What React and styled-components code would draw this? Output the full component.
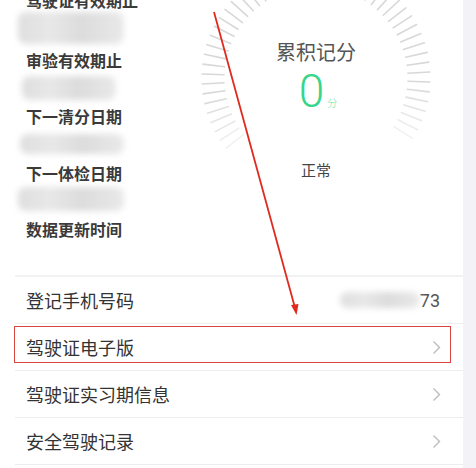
import React from "react";
import styled, { createGlobalStyle } from "styled-components";

const GlobalStyle = createGlobalStyle`
  html, body {
    margin: 0;
    padding: 0;
    background: #f3f3f7;
    overflow: hidden;
  }
  body {
    font-family: "Noto Sans CJK SC", "Noto Sans", sans-serif;
  }
`;

const Screen = styled.div`
  position: relative;
  width: 476px;
  height: 468px;
  overflow: hidden;
  background: #f3f3f7;
`;

const Card = styled.div`
  width: 463px;
  height: 468px;
  background: #fff;
  overflow: hidden;
`;

const TopSection = styled.section`
  display: flex;
  height: 286px;
  margin-top: -11px;
`;

const InfoList = styled.div`
  flex: 0 0 178px;
  padding-left: 18px;
  display: flex;
  flex-direction: column;
`;

const InfoRow = styled.div`
  display: flex;
  flex-direction: column;
  height: ${(p) => p.$h || 57}px;
`;

const InfoLabel = styled.div`
  padding-left: 8px;
  font-size: 16px;
  line-height: 22px;
  font-weight: 700;
  color: #3a3a3a;
`;

const BlurValue = styled.div`
  width: ${(p) => p.$w}px;
  height: ${(p) => p.$h}px;
  margin-top: ${(p) => p.$top || 0}px;
  margin-left: ${(p) => p.$left || 0}px;
  border-radius: 8px;
  background: linear-gradient(90deg, #dedede 0%, #e8e8e8 30%, #dcdcdc 60%, #e9e9e9 100%);
  filter: blur(3px);
`;

const Gauge = styled.div`
  position: relative;
  flex: 0 0 240px;
  height: 240px;
  margin-top: -31px;
`;

const GaugeContent = styled.div`
  position: relative;
  display: flex;
  flex-direction: column;
  align-items: center;
  padding-top: 80px;
`;

const GaugeTitle = styled.div`
  font-size: 20px;
  line-height: 28px;
  color: #555;
`;

const Score = styled.div`
  height: 50px;
  line-height: 50px;
  font-family: Roboto, "Liberation Sans", sans-serif;
  font-weight: 300;
  font-size: 46px;
  color: #38d68a;
  margin-left: 4px;
`;

const ScoreUnit = styled.span`
  font-family: "Noto Sans CJK SC", sans-serif;
  font-size: 10px;
  color: #6ddfa8;
  margin-left: 3px;
`;

const Status = styled.div`
  margin-top: 44px;
  font-size: 15px;
  line-height: 20px;
  color: #444;
`;

const List = styled.div`
  margin-left: 15px;
  border-top: 2px solid #f2f2f2;
`;

const Row = styled.div`
  position: relative;
  display: flex;
  align-items: center;
  justify-content: space-between;
  height: 46px;
  padding: 0 22px 0 11px;
  border-bottom: 1px solid #ededed;
`;

const RowLabel = styled.div`
  font-size: 18px;
  color: #333;
`;

const PhoneValue = styled.div`
  display: flex;
  align-items: center;
  margin-right: 1px;
`;

const PhoneTail = styled.span`
  font-family: Roboto, "Liberation Sans", sans-serif;
  font-size: 18px;
  color: #555;
`;

const Highlight = styled.div`
  position: absolute;
  left: -1px;
  right: 12px;
  top: 2px;
  height: 37px;
  border: 1.5px solid #d9463f;
  box-sizing: border-box;
`;

const Annotation = styled.svg`
  position: absolute;
  left: 0;
  top: 0;
  pointer-events: none;
`;

function Ticks() {
  const cx = 120;
  const cy = 120;
  const start = 142;
  const end = 396;
  const step = 5;
  const count = Math.floor((end - start) / step) + 1;
  const lines = [];
  for (let i = 0; i < count; i++) {
    const a = ((start + i * step) * Math.PI) / 180;
    const edge = Math.min(i, count - 1 - i);
    const opacity = edge < 6 ? 0.35 + edge * 0.11 : 1;
    lines.push(
      <line
        key={i}
        x1={cx + 92 * Math.cos(a)}
        y1={cy + 92 * Math.sin(a)}
        x2={cx + 114 * Math.cos(a)}
        y2={cy + 114 * Math.sin(a)}
        stroke="#d8d8d8"
        strokeWidth="1.6"
        strokeLinecap="round"
        opacity={opacity}
      />
    );
  }
  return (
    <svg width="240" height="240" style={{ position: "absolute", left: 0, top: 0 }}>
      {lines}
    </svg>
  );
}

function Chevron() {
  return (
    <svg width="9" height="15" viewBox="0 0 9 15">
      <polyline points="1.5,1.5 7.5,7.5 1.5,13.5" fill="none" stroke="#bdbdbd" strokeWidth="1.4" />
    </svg>
  );
}

export default function App() {
  return (
    <Screen>
      <GlobalStyle />
      <Card>
        <TopSection>
          <InfoList>
            <InfoRow $h={60}>
              <InfoLabel>驾驶证有效期止</InfoLabel>
              <BlurValue $w={106} $h={32} $top={1} />
            </InfoRow>
            <InfoRow>
              <InfoLabel>审验有效期止</InfoLabel>
              <BlurValue $w={94} $h={24} $top={5} $left={4} />
            </InfoRow>
            <InfoRow>
              <InfoLabel>下一清分日期</InfoLabel>
              <BlurValue $w={104} $h={20} $top={7} $left={2} />
            </InfoRow>
            <InfoRow>
              <InfoLabel>下一体检日期</InfoLabel>
              <BlurValue $w={106} $h={24} $top={3} />
            </InfoRow>
            <InfoRow>
              <InfoLabel>数据更新时间</InfoLabel>
            </InfoRow>
          </InfoList>
          <Gauge>
            <Ticks />
            <GaugeContent>
              <GaugeTitle>累积记分</GaugeTitle>
              <Score>
                0<ScoreUnit>分</ScoreUnit>
              </Score>
              <Status>正常</Status>
            </GaugeContent>
          </Gauge>
        </TopSection>
        <List>
          <Row>
            <RowLabel>登记手机号码</RowLabel>
            <PhoneValue>
              <BlurValue $w={80} $h={16} />
              <PhoneTail>73</PhoneTail>
            </PhoneValue>
          </Row>
          <Row>
            <RowLabel>驾驶证电子版</RowLabel>
            <Chevron />
            <Highlight />
          </Row>
          <Row>
            <RowLabel>驾驶证实习期信息</RowLabel>
            <Chevron />
          </Row>
          <Row>
            <RowLabel>安全驾驶记录</RowLabel>
            <Chevron />
          </Row>
        </List>
      </Card>
      <Annotation width="476" height="468">
        <line x1="214" y1="12" x2="294.5" y2="306" stroke="#e02a20" strokeWidth="1.8" />
        <polygon points="291,305 298.5,304 296.5,315" fill="#e02a20" />
      </Annotation>
    </Screen>
  );
}
